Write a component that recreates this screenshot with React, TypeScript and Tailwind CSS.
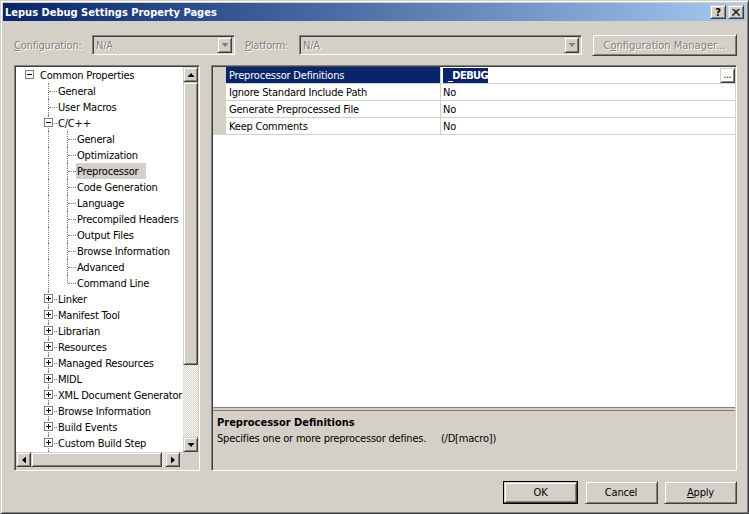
import type { ReactNode } from 'react';

const raised =
  'border border-t-[#d4d0c8] border-l-[#d4d0c8] border-r-[#404040] border-b-[#404040] shadow-[inset_1px_1px_0_#fff,inset_-1px_-1px_0_#808080]';
const sunken =
  'border border-t-[#808080] border-l-[#808080] border-r-white border-b-white shadow-[inset_1px_1px_0_#404040,inset_-1px_-1px_0_#d4d0c8]';
const disabledText = 'text-[#808080] [text-shadow:1px_1px_0_#fff]';
const dither = 'bg-[repeating-conic-gradient(#d4d0c8_0_25%,#fff_0_50%)] bg-size-[2px_2px]';

type TreeItem = { label: string; level: 0 | 1 | 2; toggle?: 'plus' | 'minus'; selected?: boolean; last?: boolean };

const treeItems: TreeItem[] = [
  { label: 'Common Properties', level: 0, toggle: 'minus' },
  { label: 'General', level: 1 },
  { label: 'User Macros', level: 1 },
  { label: 'C/C++', level: 1, toggle: 'minus' },
  { label: 'General', level: 2 },
  { label: 'Optimization', level: 2 },
  { label: 'Preprocessor', level: 2, selected: true },
  { label: 'Code Generation', level: 2 },
  { label: 'Language', level: 2 },
  { label: 'Precompiled Headers', level: 2 },
  { label: 'Output Files', level: 2 },
  { label: 'Browse Information', level: 2 },
  { label: 'Advanced', level: 2 },
  { label: 'Command Line', level: 2, last: true },
  { label: 'Linker', level: 1, toggle: 'plus' },
  { label: 'Manifest Tool', level: 1, toggle: 'plus' },
  { label: 'Librarian', level: 1, toggle: 'plus' },
  { label: 'Resources', level: 1, toggle: 'plus' },
  { label: 'Managed Resources', level: 1, toggle: 'plus' },
  { label: 'MIDL', level: 1, toggle: 'plus' },
  { label: 'XML Document Generator', level: 1, toggle: 'plus' },
  { label: 'Browse Information', level: 1, toggle: 'plus' },
  { label: 'Build Events', level: 1, toggle: 'plus' },
  { label: 'Custom Build Step', level: 1, toggle: 'plus' },
];

function Toggle({ kind }: { kind: 'plus' | 'minus' }) {
  return (
    <svg className="absolute left-[5px] top-[3px] z-10" width="9" height="9" viewBox="0 0 9 9">
      <rect x="0.5" y="0.5" width="8" height="8" fill="#fff" stroke="#808080" />
      <path d={kind === 'plus' ? 'M2 4.5H7M4.5 2V7' : 'M2 4.5H7'} stroke="#000" />
    </svg>
  );
}

function Cell({
  vertical,
  halfVertical,
  connector,
  toggle,
}: {
  vertical?: boolean;
  halfVertical?: boolean;
  connector?: boolean;
  toggle?: 'plus' | 'minus';
}) {
  return (
    <span className="relative h-4 w-[19px] shrink-0">
      {vertical && <span className="absolute bottom-0 left-[9px] top-0 border-l border-dotted border-[#808080]" />}
      {halfVertical && <span className="absolute left-[9px] top-0 h-2 border-l border-dotted border-[#808080]" />}
      {connector && <span className="absolute left-[10px] top-2 w-2 border-t border-dotted border-[#808080]" />}
      {toggle && <Toggle kind={toggle} />}
    </span>
  );
}

function TreeRow({ item }: { item: TreeItem }) {
  return (
    <div className="flex h-4 items-center">
      {item.level === 0 && <Cell toggle={item.toggle} />}
      {item.level === 1 && (
        <>
          <Cell />
          <Cell vertical connector toggle={item.toggle} />
        </>
      )}
      {item.level === 2 && (
        <>
          <Cell />
          <Cell vertical />
          {item.last ? <Cell halfVertical connector /> : <Cell vertical connector />}
        </>
      )}
      <span
        className={
          item.selected
            ? 'flex h-4 w-[70px] items-center whitespace-nowrap bg-[#d4d0c8] pl-px -ml-px text-black'
            : 'whitespace-nowrap text-black' + (item.level === 0 ? ' pl-px' : '')
        }
      >
        {item.label}
      </span>
    </div>
  );
}

function Arrow({ dir }: { dir: 'up' | 'down' | 'left' | 'right' }) {
  const shape = {
    up: 'M4 2L0.5 6H7.5Z',
    down: 'M4 6L0.5 2H7.5Z',
    left: 'M2 4L6 0.5V7.5Z',
    right: 'M6 4L2 0.5V7.5Z',
  }[dir];
  return (
    <svg width="8" height="8" viewBox="0 0 8 8">
      <path d={shape} fill="#000" />
    </svg>
  );
}

function ScrollButton({ dir }: { dir: 'up' | 'down' | 'left' | 'right' }) {
  return (
    <div className={`flex h-[15px] w-[15px] shrink-0 items-center justify-center bg-[#d4d0c8] ${raised}`}>
      <Arrow dir={dir} />
    </div>
  );
}

function Combo({ width, value }: { width: string; value: string }) {
  return (
    <div className={`flex h-[20px] items-center justify-between bg-[#d4d0c8] pl-[3px] pr-0.5 ${width} ${sunken}`}>
      <span className={disabledText}>{value}</span>
      <span className={`flex h-4 w-[15px] items-center justify-center ${raised}`}>
        <svg width="8" height="8" viewBox="0 0 8 8">
          <path d="M4 6L0.5 2H7.5Z" fill="#808080" />
        </svg>
      </span>
    </div>
  );
}

function PropertyRow({ name, value, selected }: { name: string; value: ReactNode; selected?: boolean }) {
  return (
    <div className="flex h-[17px] border-b border-[#d4d0c8]">
      <div className="w-[13px] shrink-0 bg-[#d4d0c8]" />
      <div
        className={`flex w-[215px] shrink-0 items-center border-r border-[#d4d0c8] pl-[3px] ${selected ? 'bg-[#0a246a] text-white' : 'text-black'}`}
      >
        {name}
      </div>
      <div className="flex min-w-0 flex-1 items-center justify-between pl-0.5 text-black">{value}</div>
    </div>
  );
}

function DialogButton({ children, isDefault }: { children: ReactNode; isDefault?: boolean }) {
  return (
    <div className={isDefault ? 'border border-black' : ''}>
      <div
        className={`flex items-center justify-center bg-[#d4d0c8] text-black ${raised} ${isDefault ? 'h-[21px] w-[73px]' : 'h-[23px] w-[73px]'}`}
      >
        {children}
      </div>
    </div>
  );
}

export default function App() {
  return (
    <div className="h-[514px] w-[749px] overflow-hidden border border-b-[#404040] border-l-[#d4d0c8] border-r-[#404040] border-t-[#d4d0c8] bg-[#d4d0c8] p-0.5 font-['DejaVu_Sans_Condensed','Noto_Sans',sans-serif] text-[11px] leading-none tracking-[-0.2px] shadow-[inset_1px_1px_0_#fff,inset_-1px_-1px_0_#808080]">
      <div className="flex h-[18px] items-center justify-between bg-linear-to-r from-[#0a246a] to-[#a6caf0] pl-0.5 pr-0.5">
        <span className="text-[11px] font-bold tracking-normal text-white">Lepus Debug Settings Property Pages</span>
        <div className="flex gap-0.5">
          <div className={`flex h-[14px] w-4 items-center justify-center bg-[#d4d0c8] text-[11px] font-bold text-black ${raised}`}>?</div>
          <div className={`flex h-[14px] w-4 items-center justify-center bg-[#d4d0c8] ${raised}`}>
            <svg width="8" height="7" viewBox="0 0 8 7">
              <path d="M0.5 0L7.5 7M7.5 0L0.5 7M1.5 0L8 6.5M6.5 0L0 6.5" stroke="#000" fill="none" />
            </svg>
          </div>
        </div>
      </div>

      <div className="ml-[11px] mt-[13px] flex h-[22px] w-[723px] items-center">
        <span className={`w-[78px] ${disabledText}`}>
          <span className="underline">C</span>onfiguration:
        </span>
        <Combo width="w-[143px]" value="N/A" />
        <span className={`ml-[10px] w-[54px] ${disabledText}`}>
          <span className="underline">P</span>latform:
        </span>
        <Combo width="w-[283px]" value="N/A" />
        <div className={`ml-[10px] flex h-[22px] w-[145px] items-center justify-center tracking-normal ${raised} ${disabledText}`}>
          C<span className="underline">o</span>nfiguration Manager...
        </div>
      </div>

      <div className="ml-[11px] mt-[9px] flex h-[406px] gap-[11px]">
        <div className={`flex w-[186px] flex-col bg-white ${sunken} p-px`}>
          <div className="flex min-h-0 flex-1">
            <div className="min-w-0 flex-1 overflow-hidden pl-[4px] pt-0">
              {treeItems.map((item, i) => (
                <TreeRow key={i} item={item} />
              ))}
              <div className="flex h-4">
                <Cell />
                <Cell vertical />
              </div>
            </div>
            <div className="flex w-[15px] shrink-0 flex-col">
              <ScrollButton dir="up" />
              <div className={`h-[283px] shrink-0 bg-[#d4d0c8] ${raised}`} />
              <div className={`min-h-0 flex-1 ${dither}`} />
              <ScrollButton dir="down" />
            </div>
          </div>
          <div className="flex h-[17px] shrink-0 bg-[#d4d0c8]">
            <ScrollButton dir="left" />
            <div className={`h-[15px] w-[131px] shrink-0 bg-[#d4d0c8] ${raised}`} />
            <div className={`h-[15px] w-[3px] shrink-0 ${dither}`} />
            <ScrollButton dir="right" />
          </div>
        </div>

        <div className={`flex w-[526px] flex-col ${sunken} p-px`}>
          <div className="min-h-0 flex-1 bg-white">
            <PropertyRow
              selected
              name="Preprocessor Definitions"
              value={
                <>
                  <span className="bg-[#0a246a] py-0.5 pl-[5px] font-bold tracking-[-0.6px] text-white">_DEBUG</span>
                  <span className={`flex h-[15px] w-[15px] items-end justify-center pb-0.5 text-[10px] text-black ${raised}`}>...</span>
                </>
              }
            />
            <PropertyRow name="Ignore Standard Include Path" value="No" />
            <PropertyRow name="Generate Preprocessed File" value="No" />
            <PropertyRow name="Keep Comments" value="No" />
          </div>
          <div className="h-[4px] shrink-0 border-y border-[#808080] bg-[#d4d0c8]" />
          <div className="flex h-[58px] shrink-0 flex-col gap-[5px] bg-[#d4d0c8] pl-[4px] pt-[6px] text-black">
            <span className="font-bold tracking-normal">Preprocessor Definitions</span>
            <span className="whitespace-pre">Specifies one or more preprocessor defines.     (/D[macro])</span>
          </div>
        </div>
      </div>

      <div className="ml-[500px] mt-[10px] flex w-[234px] justify-between">
        <DialogButton isDefault>OK</DialogButton>
        <DialogButton>Cancel</DialogButton>
        <DialogButton>
          <span className="underline">A</span>pply
        </DialogButton>
      </div>
    </div>
  );
}
